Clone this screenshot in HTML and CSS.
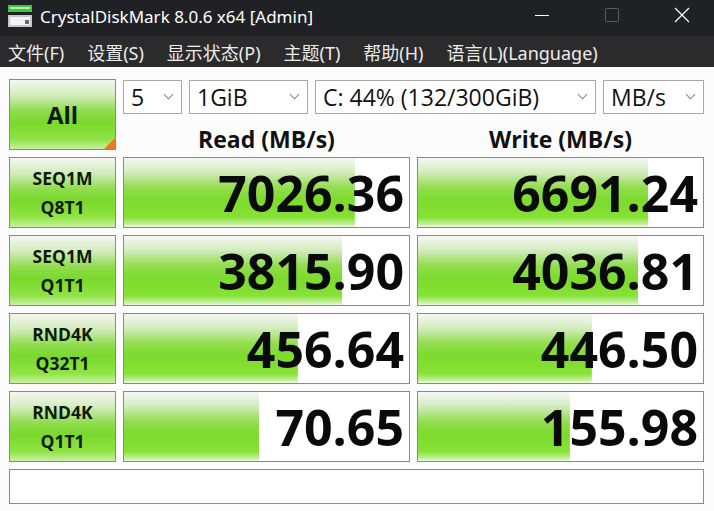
FILE: index.html
```html
<!DOCTYPE html>
<html>
<head>
  <title>CrystalDiskMark 8.0.6 x64 [Admin]</title>
  <link rel="stylesheet" href="styles.css">
</head>
<body>
  <div class="titlebar">
    <svg class="app-icon" width="26" height="24" viewBox="0 0 26 24">
      <rect x="1" y="1" width="24" height="7" fill="#3cc83c"/>
      <rect x="3" y="3" width="20" height="2" fill="#b6f0b0"/>
      <rect x="1" y="11" width="24" height="12" fill="#c8c8c8"/>
      <rect x="3" y="13" width="20" height="8" fill="#f2f2f2"/>
      <rect x="18" y="16" width="4" height="4" fill="#6a6a6a"/>
    </svg>
    <span class="title">CrystalDiskMark 8.0.6 x64 [Admin]</span>
    <div class="controls">
      <svg width="16" height="16" viewBox="0 0 16 16"><line x1="1" y1="8.5" x2="15" y2="8.5" stroke="#fff" stroke-width="1"/></svg>
      <svg width="16" height="16" viewBox="0 0 16 16"><rect x="1.5" y="1.5" width="13" height="13" rx="1" fill="none" stroke="#5c5c5c" stroke-width="1"/></svg>
      <svg width="16" height="16" viewBox="0 0 16 16"><path d="M1 1 L15 15 M15 1 L1 15" stroke="#fff" stroke-width="1.2"/></svg>
    </div>
  </div>

  <div class="menubar">
    <span>文件(F)</span>
    <span>设置(S)</span>
    <span>显示状态(P)</span>
    <span>主题(T)</span>
    <span>帮助(H)</span>
    <span>语言(L)(Language)</span>
  </div>

  <div class="bench">
    <div class="all-btn">All</div>

    <div class="selects">
      <div class="select w-count">5<i class="chev"></i></div>
      <div class="select w-size">1GiB<i class="chev"></i></div>
      <div class="select w-drive">C: 44% (132/300GiB)<i class="chev"></i></div>
      <div class="select w-unit">MB/s<i class="chev"></i></div>
    </div>

    <div class="head">Read (MB/s)</div>
    <div class="head">Write (MB/s)</div>

    <div class="label">SEQ1M<br>Q8T1</div>
    <div class="score" style="--fill:81%">7026.36</div>
    <div class="score" style="--fill:80.7%">6691.24</div>

    <div class="label">SEQ1M<br>Q1T1</div>
    <div class="score" style="--fill:76.5%">3815.90</div>
    <div class="score" style="--fill:77.2%">4036.81</div>

    <div class="label">RND4K<br>Q32T1</div>
    <div class="score" style="--fill:61%">456.64</div>
    <div class="score" style="--fill:61%">446.50</div>

    <div class="label">RND4K<br>Q1T1</div>
    <div class="score" style="--fill:47.4%">70.65</div>
    <div class="score" style="--fill:53.3%">155.98</div>

    <div class="comment"></div>
  </div>
</body>
</html>
```

FILE: styles.css
```css
* {
  box-sizing: border-box;
}

body {
  margin: 0;
  background-color: #fcfcfc;
  font-family: "Open Sans", "Noto Sans", "Noto Sans CJK SC", sans-serif;
  color: #111;
}

.titlebar {
  height: 36px;
  background-color: #202124;
  color: #fff;
  display: flex;
  align-items: center;
  padding-left: 7px;
}

.app-icon {
  display: block;
  margin-top: -4px;
}

.title {
  margin-left: 7px;
  font-family: "Noto Sans", sans-serif;
  font-size: 17px;
  margin-top: -4px;
}

.controls {
  margin-left: auto;
  display: flex;
  align-items: center;
  gap: 54px;
  padding-right: 24px;
  margin-top: -6px;
}

.controls svg {
  display: block;
}

.menubar {
  height: 31px;
  background-color: #2b2b2b;
  color: #ececec;
  display: flex;
  align-items: center;
  gap: 23px;
  padding-left: 8px;
  font-family: "Noto Sans", "Noto Sans CJK SC", sans-serif;
  font-size: 18px;
}

.bench {
  display: grid;
  grid-template-columns: 107px 287px 287px;
  grid-template-rows: 35px 29px repeat(4, 71px) 35px;
  gap: 7px;
  padding: 12px 0 0 9px;
}

.all-btn {
  grid-row: 1 / 3;
  position: relative;
  border: 1px solid #8a8a8a;
  background: linear-gradient(to bottom, #f4f7f0 0%, #d2ecbc 22%, #8fdc4c 45%, #7ad82c 62%, #90e444 86%, #c9f0a6 100%);
  display: flex;
  justify-content: center;
  align-items: center;
  font-size: 24px;
  font-weight: 700;
  color: #0d1a08;
}

/* orange corner mark on the start button */
.all-btn::after {
  content: "";
  position: absolute;
  right: 0;
  bottom: 0;
  border-style: solid;
  border-width: 0 0 11px 11px;
  border-color: transparent transparent #ee7a1c transparent;
}

.selects {
  grid-column: 2 / 4;
  display: flex;
  gap: 7px;
  padding-top: 1px;
}

.select {
  height: 34px;
  border: 1px solid #a8a8a8;
  background-color: #fff;
  display: flex;
  align-items: center;
  padding-left: 7px;
  font-size: 23px;
  color: #111;
}

.w-count { width: 59px; }
.w-size { width: 119px; }
.w-drive { width: 281px; }
.w-unit { width: 101px; }

.chev {
  margin-left: auto;
  margin-right: 9px;
  width: 7px;
  height: 7px;
  border-right: 1px solid #888;
  border-bottom: 1px solid #888;
  transform: rotate(45deg);
  margin-top: -5px;
}

.head {
  text-align: center;
  font-size: 23px;
  font-weight: 700;
  line-height: 29px;
  padding-top: 4px;
  color: #111;
}

.label {
  border: 1px solid #8a8a8a;
  background: linear-gradient(to bottom, #f4f7f0 0%, #d2ecbc 22%, #8fdc4c 45%, #7ad82c 62%, #90e444 86%, #c9f0a6 100%);
  display: flex;
  justify-content: center;
  align-items: center;
  text-align: center;
  font-size: 17.5px;
  font-weight: 700;
  line-height: 29px;
  color: #0d1a08;
}

.score {
  border: 1px solid #8a8a8a;
  background-color: #fff;
  background-image: linear-gradient(to bottom, #f6f8f3 0%, #d4ecc0 20%, #94de52 42%, #7ddb2e 60%, #86e234 86%, #c2f09a 96%, #eefae4 100%);
  background-repeat: no-repeat;
  background-size: var(--fill) 100%;
  display: flex;
  justify-content: flex-end;
  align-items: center;
  padding-right: 5px;
  font-size: 50px;
  font-weight: 700;
  color: #0a0a0a;
}

.comment {
  grid-column: 1 / 4;
  border: 1px solid #8a8a8a;
  background-color: #fff;
}
```
